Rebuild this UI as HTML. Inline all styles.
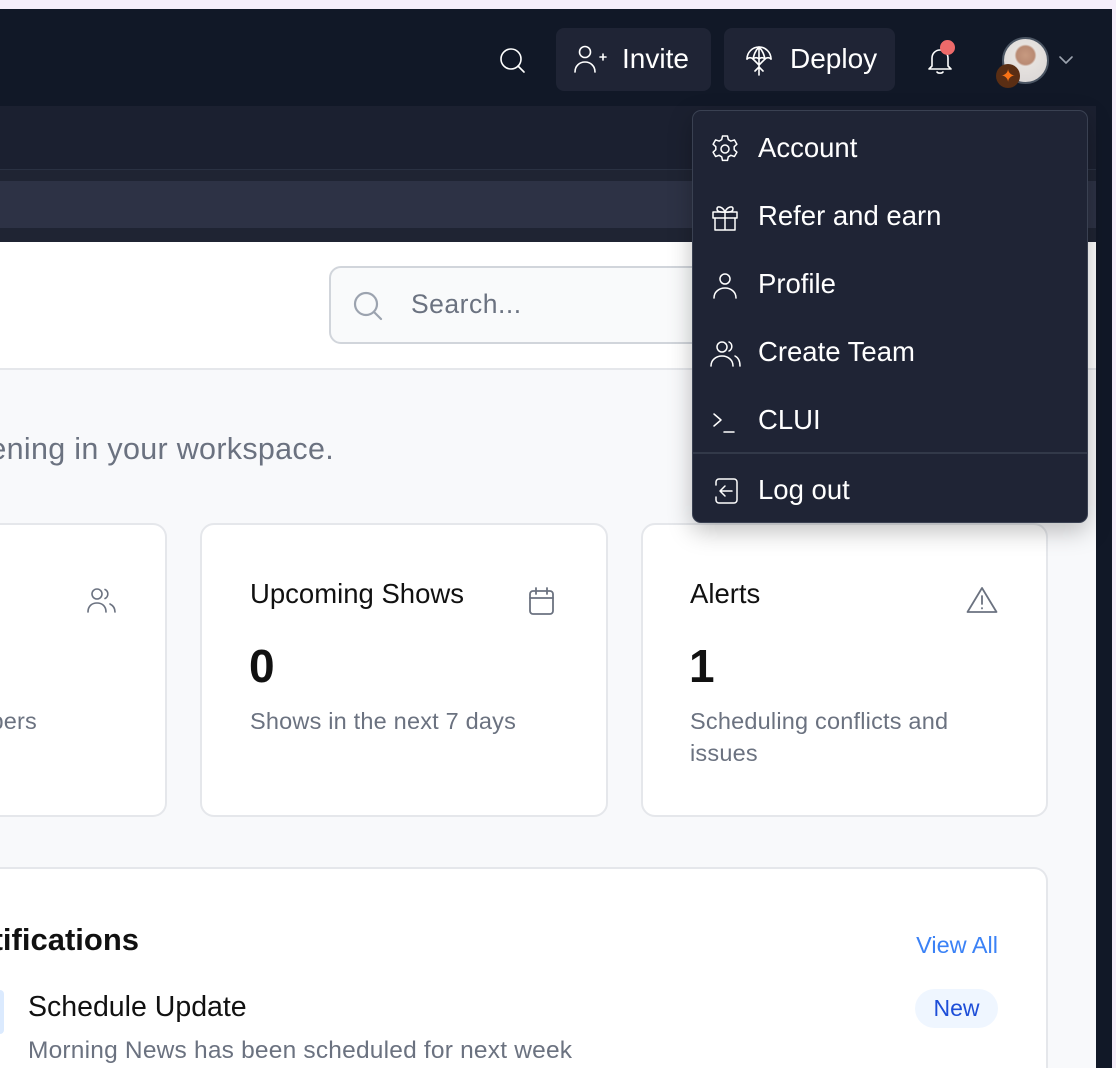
<!DOCTYPE html>
<html style="overflow:hidden"><head><meta charset="utf-8"><style>
*{box-sizing:border-box;margin:0;padding:0}
html,body{width:1116px;height:1068px;overflow:hidden}
body{position:relative;background:#f5eefa;font-family:"Liberation Sans",sans-serif}
#w{position:absolute;left:0;top:0;width:1116px;height:1068px;overflow:hidden}
.a{position:absolute}
svg{position:absolute;fill:none;stroke-linecap:round;stroke-linejoin:round}
.hd svg{stroke:#fff;stroke-width:1.6}
.mi{position:absolute;left:0;width:100%;height:40px}
.mi span{position:absolute;left:65px;top:4px;font-size:27.5px;color:#fff}
.mi svg{left:16px;top:5px;stroke:#fff;stroke-width:1.5}
.card{position:absolute;background:#fff;border:2px solid #e5e7eb;border-radius:14px}
.ct{position:absolute;font-size:27.5px;color:#111}
.cn{position:absolute;font-size:46px;font-weight:bold;color:#111}
.cs{position:absolute;font-size:23.5px;color:#6b7280;line-height:32px;letter-spacing:.2px}
</style></head><body><div id="w">
<div class="a" style="left:0;top:9px;width:1112px;height:1059px;background:#111827"></div>
<div class="a" style="left:1112px;top:0;width:4px;height:1068px;background:#f5eefa"></div>
<div class="a" style="left:0;top:106px;width:1096px;height:63px;background:#1b2030"></div>
<div class="a" style="left:0;top:169px;width:1096px;height:73px;background:#1f2433;border-top:1px solid #2a3142"></div>
<div class="a" style="left:0;top:181px;width:1096px;height:47px;background:#2d3245"></div>
<div class="a" style="left:0;top:242px;width:1096px;height:126px;background:#fff"></div>
<div class="a" style="left:0;top:368px;width:1096px;height:700px;background:#f8f9fb;border-top:2px solid #e5e7eb"></div>

<div class="hd">
<svg style="left:497px;top:45px" width="30" height="30" viewBox="0 0 30 30"><circle cx="14" cy="14" r="10"/><path d="M21 21l6 6"/></svg>
<div class="a" style="left:556px;top:28px;width:155px;height:63px;background:#1f2435;border-radius:8px"></div>
<svg style="left:572px;top:44px" width="36" height="30" viewBox="0 0 36 30"><circle cx="13" cy="8" r="5.5"/><path d="M3 28c0-6 4.5-10 10-10s10 4 10 10"/><path d="M28 13h6M31 10v6"/></svg>
<div class="a" style="left:622px;top:43px;font-size:28px;color:#fff">Invite</div>
<div class="a" style="left:724px;top:28px;width:171px;height:63px;background:#1f2435;border-radius:8px"></div>
<svg style="left:744px;top:44px" width="30" height="34" viewBox="0 0 30 34"><path d="M3 15a12 12 0 0 1 24 0"/><path d="M3 15c3-3 6 0 6 0s3-3 6 0c3-3 6 0 6 0s3-3 6 0"/><path d="M15 3v28M15 3c-4 4-5 8-6 12M15 3c4 4 5 8 6 12M9 15l6 6 6-6M11 27l4-4 4 4"/></svg>
<div class="a" style="left:790px;top:43px;font-size:28px;color:#fff">Deploy</div>
<svg style="left:924px;top:42px" width="34" height="34" viewBox="0 0 34 34"><path d="M8 24V16a8 8 0 0 1 16 0v8l3 3H5z"/><path d="M13 30c1 1.5 5 1.5 6 0"/></svg>
<div class="a" style="left:940px;top:40px;width:15px;height:15px;border-radius:50%;background:#ee6a6a"></div>
<div class="a" style="left:1002px;top:37px;width:47px;height:47px;border-radius:50%;border:2px solid #4b5563;background:radial-gradient(circle at 50% 38%,#c79a80 0,#b98a73 9px,#e6e2df 11px,#d8d4d4 100%)"></div>
<div class="a" style="left:996px;top:64px;width:24px;height:24px;border-radius:50%;background:#5a2e14;color:#f97316;font-size:18px;line-height:24px;text-align:center">✦</div>
<svg style="left:1058px;top:54px" width="16" height="12" viewBox="0 0 16 12"><path d="M2 3l6 6 6-6" stroke="#9ca3af"/></svg>
</div>

<div class="a" style="left:329px;top:266px;width:420px;height:78px;background:#f9fafb;border:2px solid #d1d5db;border-radius:12px"></div>
<svg style="left:352px;top:290px;stroke:#9ca3af;stroke-width:2.2" width="32" height="32" viewBox="0 0 32 32"><circle cx="14" cy="14" r="11"/><path d="M22 22l7 7"/></svg>
<div class="a" style="left:411px;top:289px;font-size:26.5px;color:#6b7280;letter-spacing:.5px">Search...</div>

<div class="a" style="right:782px;top:432px;font-size:30.5px;color:#6b7280;white-space:nowrap;letter-spacing:.3px">Here's what's happening in your workspace.</div>

<div class="card" style="left:0;top:523px;width:167px;height:294px;border-left:none;border-radius:0 14px 14px 0"></div>
<svg style="left:86px;top:586px;stroke:#6b7280;stroke-width:1.6" width="32" height="30" viewBox="0 0 32 30"><circle cx="11" cy="8" r="5"/><path d="M2 26c0-6 4-9 9-9s9 3 9 9"/><path d="M19 3.5a5 5 0 0 1 0 9M24 18c3 1.5 5 4 5 8"/></svg>
<div class="cs" style="right:1079px;top:705px;white-space:nowrap">Team members</div>

<div class="card" style="left:200px;top:523px;width:408px;height:294px"></div>
<div class="ct" style="left:250px;top:578px">Upcoming Shows</div>
<svg style="left:527px;top:585px;stroke:#6b7280;stroke-width:1.8" width="30" height="32" viewBox="0 0 30 32"><rect x="3" y="6" width="23" height="23" rx="3"/><path d="M3 13h23M9 3v6M20 3v6"/></svg>
<div class="cn" style="left:249px;top:639px">0</div>
<div class="cs" style="left:250px;top:705px">Shows in the next 7 days</div>

<div class="card" style="left:641px;top:523px;width:407px;height:294px"></div>
<div class="ct" style="left:690px;top:578px">Alerts</div>
<svg style="left:965px;top:585px;stroke:#6b7280;stroke-width:1.8" width="34" height="30" viewBox="0 0 34 30"><path d="M17 3L2.5 27h29z"/><path d="M17 11v8M17 23v.5"/></svg>
<div class="cn" style="left:689px;top:639px">1</div>
<div class="cs" style="left:690px;top:705px;width:320px">Scheduling conflicts and issues</div>

<div class="card" style="left:0;top:867px;width:1048px;height:201px;border-left:none;border-bottom:none;border-radius:0 14px 0 0"></div>
<div class="a" style="right:977px;top:922px;font-size:31px;font-weight:bold;color:#111;white-space:nowrap">Notifications</div>
<div class="a" style="right:118px;top:932px;font-size:23.5px;color:#3b82f6">View All</div>
<div class="a" style="left:0;top:990px;width:4px;height:44px;border-radius:0 22px 22px 0;background:#dbeafe"></div>
<div class="a" style="left:28px;top:991px;font-size:28.5px;color:#111">Schedule Update</div>
<div class="a" style="left:28px;top:1037px;font-size:24.5px;color:#6b7280;letter-spacing:.2px">Morning News has been scheduled for next week</div>
<div class="a" style="left:915px;top:989px;width:83px;height:39px;border-radius:20px;background:#eff6ff;color:#1d4ed8;font-size:23px;text-align:center;line-height:39px">New</div>

<div class="a" style="left:692px;top:110px;width:396px;height:413px;background:#1f2435;border:1px solid #3a4152;border-radius:9px;box-shadow:0 8px 24px rgba(0,0,0,.25)">
 <div class="mi" style="top:17px"><svg width="32" height="32" viewBox="0 0 32 32"><path d="M13.5 3h5l.8 3.6 2.6 1.5 3.5-1.2 2.5 4.3-2.7 2.5v3l2.7 2.5-2.5 4.3-3.5-1.2-2.6 1.5-.8 3.6h-5l-.8-3.6-2.6-1.5-3.5 1.2-2.5-4.3 2.7-2.5v-3L4.1 11.2l2.5-4.3 3.5 1.2 2.6-1.5z"/><circle cx="16" cy="16" r="4"/></svg><span>Account</span></div>
 <div class="mi" style="top:85px"><svg width="32" height="32" viewBox="0 0 32 32"><rect x="4" y="11" width="24" height="6"/><path d="M6 17v12h20V17M16 11v18M16 11c-2-5-8-7-8-3s8 3 8 3zM16 11c2-5 8-7 8-3s-8 3-8 3z"/></svg><span>Refer and earn</span></div>
 <div class="mi" style="top:153px"><svg width="32" height="32" viewBox="0 0 32 32"><circle cx="16" cy="10" r="5"/><path d="M5 29c0-6 5-10 11-10s11 4 11 10"/></svg><span>Profile</span></div>
 <div class="mi" style="top:221px"><svg width="34" height="32" viewBox="0 0 34 32"><circle cx="13" cy="10" r="5"/><path d="M2 29c0-6 5-10 11-10s11 4 11 10M20 5a5 5 0 0 1 0 9M26 19c3 1.5 5 5 5 10"/></svg><span>Create Team</span></div>
 <div class="mi" style="top:289px"><svg width="32" height="32" viewBox="0 0 32 32"><path d="M5 9l7 6-7 6M15 27h10"/></svg><span>CLUI</span></div>
 <div class="a" style="left:0;top:341px;width:100%;height:2px;background:#323949"></div>
 <div class="mi" style="top:359px"><svg width="32" height="32" viewBox="0 0 32 32"><path d="M10 4h15a3 3 0 0 1 3 3v18a3 3 0 0 1-3 3H10a3 3 0 0 1-3-3v-3M7 10V7a3 3 0 0 1 3-3"/><path d="M23 16H12M16 11l-5 5 5 5"/></svg><span>Log out</span></div>
</div>
</div></body></html>
